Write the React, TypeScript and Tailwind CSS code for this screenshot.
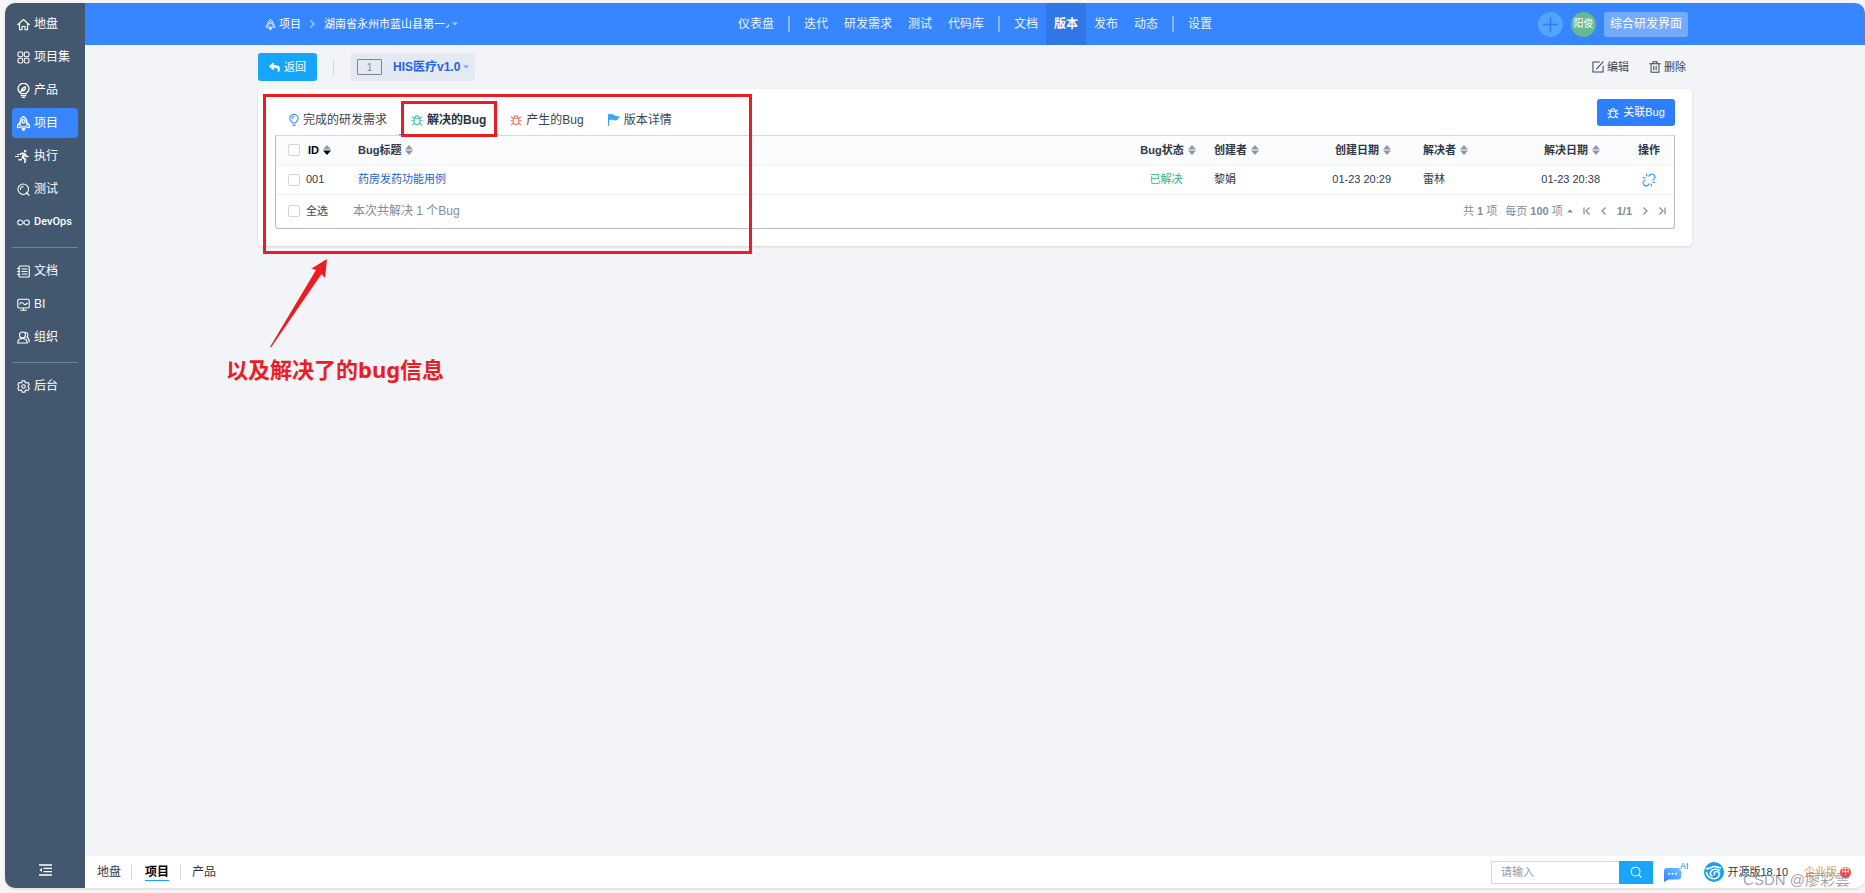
import type { ReactNode } from 'react';
import { FaReply, FaRunning } from 'react-icons/fa';
import { Unlink } from 'lucide-react';

type MenuItem = { name: string; icon: ReactNode; active?: boolean; textClass?: string };

function Icon({ children, className = 'size-[13px]' }: { children: ReactNode; className?: string }) {
  return (
    <svg
      viewBox="0 0 26 26"
      fill="none"
      stroke="currentColor"
      strokeWidth="2.2"
      strokeLinecap="round"
      strokeLinejoin="round"
      aria-hidden="true"
      className={`shrink-0 ${className}`}
    >
      {children}
    </svg>
  );
}

const HomeIcon = () => (
  <Icon>
    <path d="M1.5 13.5 13 3l11.5 10.5M5 11v12.5h5V17h6v6.5h5V11" />
  </Icon>
);

const ProgramIcon = () => (
  <Icon>
    <rect x="2" y="2" width="9.5" height="9.5" rx="3" />
    <rect x="14.5" y="2" width="9.5" height="9.5" rx="3" />
    <rect x="2" y="14.5" width="9.5" height="9.5" rx="3" />
    <rect x="14.5" y="14.5" width="9.5" height="9.5" rx="3" />
  </Icon>
);

const ProductIcon = () => (
  <Icon className="-mx-px size-[15px]">
    <path d="M8.5 18.500C7.500 16 3.500 15 3.500 10a9.500 9.500 0 0 1 19 0c0 5-4 6-5 8.500z" />
    <path d="M9.5 13c0-4 3-5.500 7-6.500 0 4-1.500 7-5.500 7M8.500 15l4-4.500" />
    <path d="M9 22h8M11 25h4" />
  </Icon>
);

const RocketIcon = ({ className }: { className?: string }) => (
  <Icon className={className}>
    <path d="M13 1C8.500 3.500 7 7.500 7 12c-3 1.500-4.500 4-4.500 7.500 1.500 1 3.500.5 5-.5h11c1.500 1 3.500 1.500 5 .5 0-3.500-1.500-6-4.500-7.500 0-4.500-1.500-8.500-6-11z" />
    <circle cx="13" cy="9" r="2.8" />
    <path d="M7 12v4M19 12v4" />
    <path d="M10.500 22h5L13 25.500z" fill="currentColor" />
  </Icon>
);

const RunIcon = () => (
  <span className="flex w-[13px] shrink-0 items-center justify-end">
    <svg viewBox="0 0 4 12" className="h-3 w-1 shrink-0" stroke="currentColor" aria-hidden="true">
      <path d="M0 6.500h4M2 4.500h2" />
    </svg>
    <FaRunning className="-ml-0.5 size-[13px] shrink-0" />
  </span>
);

const TestIcon = () => (
  <Icon>
    <circle cx="12.500" cy="12.500" r="10.500" />
    <path d="M7 12.500A5.500 5.500 0 0 1 12.500 7M19 19.500l5 5" />
  </Icon>
);

const DevopsIcon = () => (
  <Icon>
    <path d="M13 13c-2.500-3.500-4-5-6.500-5a5 5 0 0 0 0 10c2.500 0 4-1.500 6.500-5s4-5 6.500-5a5 5 0 0 1 0 10c-2.500 0-4-1.500-6.500-5z" />
  </Icon>
);

const DocIcon = () => (
  <Icon>
    <rect x="4" y="2" width="20.500" height="22" rx="2" />
    <path d="M1 7h4.500M1 13h4.500M1 19h4.500M10 8h10M10 13h10M10 18h10" />
  </Icon>
);

const BiIcon = () => (
  <Icon>
    <rect x="1.500" y="2.500" width="23" height="17.500" rx="3" />
    <path d="M5.500 12c2.500-4 4.500-4 7-1s4.500 3 8-.5M7.500 24.500h11M13 20.500v3.500" />
  </Icon>
);

const OrgIcon = () => (
  <Icon>
    <circle cx="11" cy="8" r="6" />
    <path d="M1.500 24c0-6 3.500-9 9.500-9s9.500 3 9.500 9zM17 2.500c5 .5 6.500 6.500 3 10 3 1.500 4.500 4.500 4.500 9.500" />
  </Icon>
);

const AdminIcon = () => (
  <Icon>
    <path d="M10.500 1.500h5l1 3.500 2 1 3.500-1 2.500 4-2 3v2l2 3-2.500 4-3.500-1-2 1-1 3.500h-5l-1-3.500-2-1-3.500 1-2.500-4 2-3v-2l-2-3L4 5l3.500 1 2-1z" />
    <circle cx="13" cy="13" r="3.500" />
  </Icon>
);

const BugIcon = ({ className }: { className?: string }) => (
  <Icon className={className ?? 'size-[12px]'}>
    <path d="M7 9h12v8a6 6 0 0 1-12 0zM8.500 9a4.500 5 0 0 1 9 0M1.500 14.500H7M19 14.500h5.500M3 6.500 7 10M23 6.500 19 10M3 23.500l4.500-4M23 23.500l-4.500-4" />
  </Icon>
);

const BulbIcon = () => (
  <Icon className="-mx-px size-[12px] text-[#2e7fff]">
    <path d="M9.500 19.500C8.500 16 4 15 4 10a9 9 0 0 1 18 0c0 5-4.500 6-5.500 9.500zM10 24.500h6M9 9.500A4.500 4.500 0 0 1 13 5.500" />
  </Icon>
);

const FlagIcon = () => (
  <svg viewBox="0 0 12 12" className="size-[12px] shrink-0" fill="#37a9fb" aria-hidden="true">
    <path d="M0 0h1v12H0zM1 .5c2-1 3.500-.5 5 .6S9.500 2.500 12 2.500C10.800 3.600 10.500 4.800 9.500 6 7.500 7 6 6.200 4.500 5.800S2 5.800 1 6.500z" />
  </svg>
);

function Caret({ up = false }: { up?: boolean }) {
  return (
    <svg viewBox="0 0 6 4" className="h-1 w-1.5 shrink-0" fill="currentColor" aria-hidden="true">
      <path d={up ? 'M0 3.500 3 .5l3 3z' : 'M0 .5h6l-3 3z'} />
    </svg>
  );
}

function SortIcon({ desc = false }: { desc?: boolean }) {
  return (
    <svg viewBox="0 0 8 10" className="h-2.5 w-2 shrink-0" aria-hidden="true">
      <path d="M4 0 8 4.400H0z" fill="#9197a8" />
      <path d="M4 10 0 5.600h8z" fill={desc ? '#000' : '#9197a8'} />
    </svg>
  );
}

const menuGroups: MenuItem[][] = [
  [
    { name: '地盘', icon: <HomeIcon /> },
    { name: '项目集', icon: <ProgramIcon /> },
    { name: '产品', icon: <ProductIcon /> },
    { name: '项目', icon: <RocketIcon className="-mx-px size-[15px]" />, active: true },
    { name: '执行', icon: <RunIcon /> },
    { name: '测试', icon: <TestIcon /> },
    { name: 'DevOps', icon: <DevopsIcon />, textClass: "font-['Roboto',sans-serif] text-[11px] font-medium" },
  ],
  [
    { name: '文档', icon: <DocIcon /> },
    { name: 'BI', icon: <BiIcon /> },
    { name: '组织', icon: <OrgIcon /> },
  ],
  [{ name: '后台', icon: <AdminIcon /> }],
];

const navGroups = [
  ['仪表盘'],
  ['迭代', '研发需求', '测试', '代码库'],
  ['文档', '版本', '发布', '动态'],
  ['设置'],
];

function Sidebar() {
  return (
    <aside className="flex w-20 shrink-0 flex-col bg-[#43586f] px-[7px] pt-1.5 text-xs text-white">
      {menuGroups.map((group, i) => (
        <ul
          key={i}
          className={`flex flex-col gap-[3px] ${i > 0 ? 'mt-2.5 border-t border-[#6d8199] pt-2' : ''}`}
        >
          {group.map((item) => (
            <li key={item.name}>
              <a
                href="#"
                className={`flex h-[30px] items-center gap-1 rounded-sm pl-[5px] ${item.active ? 'bg-[#3785ff]' : ''}`}
              >
                {item.icon}
                <span className={item.textClass}>{item.name}</span>
              </a>
            </li>
          ))}
        </ul>
      ))}
      <button type="button" aria-label="收起" className="mx-auto mt-auto mb-3">
        <svg viewBox="0 0 13 12" className="h-3 w-[13px]" stroke="currentColor" strokeWidth="1.3" aria-hidden="true">
          <path d="M0 1h13M4.500 4.300H13M4.500 7.600H13M0 11h13" />
          <path d="M3 4v4L.5 6z" fill="currentColor" stroke="none" />
        </svg>
      </button>
    </aside>
  );
}

function Header() {
  return (
    <header className="h-[42px] shrink-0 bg-[#3785ff] text-xs text-white">
      <div className="mx-auto flex h-full max-w-[1434px] items-center">
        <div className="flex flex-1 items-center text-[11px]">
          <a href="#" className="ml-[7px] flex items-center gap-[3px]">
            <RocketIcon className="size-[11px]" />
            项目
          </a>
          <svg viewBox="0 0 5 8" className="mx-[9px] h-2 w-[5px]" fill="none" stroke="#b5d2ff" strokeWidth="1.3" aria-hidden="true">
            <path d="m.5.5 3.500 3.500-3.500 3.500" />
          </svg>
          <button type="button" className="flex items-center gap-[3px]">
            <span className="w-[125px] overflow-hidden text-left whitespace-nowrap">湖南省永州市蓝山县第一人民医院</span>
            <span className="text-[#a9ccff]">
              <Caret />
            </span>
          </button>
        </div>
        <nav className="flex h-full items-center">
          {navGroups.map((group, i) => (
            <div key={i} className="flex h-full items-center">
              {i > 0 && <span className="mx-1.5 h-4 w-0.5 bg-[#87b6ff]" />}
              {group.map((name) => (
                <a
                  key={name}
                  href="#"
                  className={`flex h-full items-center px-2 ${name === '版本' ? 'bg-[#3076e4] font-bold' : 'text-[#ebf3ff]'}`}
                >
                  {name}
                </a>
              ))}
            </div>
          ))}
        </nav>
        <div className="flex flex-1 items-center justify-end gap-2">
          <button type="button" aria-label="新建" className="flex size-[25px] items-center justify-center rounded-full bg-[#53a3ff] text-[#2c7bf5]">
            <svg viewBox="0 0 15 15" className="size-[15px]" stroke="currentColor" strokeWidth="1.5" aria-hidden="true">
              <path d="M7.500 0v15M0 7.500h15" />
            </svg>
          </button>
          <button type="button" className="flex size-[25px] items-center justify-center rounded-full bg-[#66b991] text-[10px] whitespace-nowrap">
            阳俊
          </button>
          <button type="button" className="mr-1 h-[25px] rounded-[3px] bg-[#73aaff] px-1.5">
            综合研发界面
          </button>
        </div>
      </div>
    </header>
  );
}

function Toolbar() {
  return (
    <div className="flex items-center py-2 text-[11px] text-[#3c4353]">
      <button type="button" className="flex h-7 w-[59px] items-center justify-center gap-1 rounded-[3px] bg-[#18a6fd] text-white">
        <FaReply className="size-[11px]" />
        返回
      </button>
      <span className="ml-4 h-4 w-px bg-[#d5d8de]" />
      <button type="button" className="ml-[17px] flex h-7 items-center rounded-[3px] bg-[#e5e9f2] px-1.5">
        <span className="flex h-4 w-[25px] items-center justify-center rounded-[1px] border border-[#7d849a] text-[10px] text-[#7d849a]">1</span>
        <span className="ml-[11px] text-xs font-bold text-[#2463e6]">HIS医疗v1.0</span>
        <span className="ml-[3px] text-[#7fa8f5]">
          <Caret />
        </span>
      </button>
      <button type="button" className="ml-auto flex items-center gap-[3px]">
        <Icon className="size-[12px]">
          <path d="M16 2H2v22h22V11M10 17 24 2" />
        </Icon>
        编辑
      </button>
      <button type="button" className="mr-1.5 ml-5 flex items-center gap-[3px]">
        <Icon className="size-[12px]">
          <path d="M1.500 6h23M8.500 6V1.500h9V6M4.500 6v18.500h17V6M10.500 11.500v7.500M15.500 11.500v7.500" />
        </Icon>
        删除
      </button>
    </div>
  );
}

const tabs = [
  { name: '完成的研发需求', icon: <BulbIcon /> },
  { name: '解决的Bug', icon: <BugIcon className="size-[12px] text-[#35c79b]" />, active: true },
  { name: '产生的Bug', icon: <BugIcon className="size-[12px] text-[#f96a64]" /> },
  { name: '版本详情', icon: <FlagIcon /> },
];

function Th({ children, className = '' }: { children: ReactNode; className?: string }) {
  return (
    <th className={`px-2 ${className}`}>
      <span className="flex items-center gap-1">
        {children}
        <SortIcon />
      </span>
    </th>
  );
}

function Check({ label }: { label: string }) {
  return (
    <input
      type="checkbox"
      aria-label={label}
      className="size-3 shrink-0 appearance-none rounded-[2px] border border-[#d3d6dc] bg-white checked:bg-[#2e7fff]"
    />
  );
}

function PageButton({ d, label }: { d: string; label: string }) {
  return (
    <button type="button" aria-label={label}>
      <svg viewBox="0 0 8 8" className="size-2" fill="none" stroke="currentColor" strokeWidth="1.2" aria-hidden="true">
        <path d={d} />
      </svg>
    </button>
  );
}

function BugTable() {
  return (
    <div className="rounded-b-[3px] border border-[#b9bbbf] border-t-[#d6d8dc] text-[11px] text-[#2f3747]">
      <table className="w-full table-fixed border-collapse text-left">
        <colgroup>
          <col className="w-[74px]" />
          <col />
          <col className="w-[76px]" />
          <col className="w-[100px]" />
          <col className="w-[109px]" />
          <col className="w-[100px]" />
          <col className="w-[109px]" />
          <col className="w-[50px]" />
        </colgroup>
        <thead className="bg-[#fafcfe]">
          <tr className="h-[29px] border-b border-[#eff1f4]">
            <th className="pl-3">
              <span className="flex items-center gap-1">
                <Check label="全选" />
                <span className="ml-1 text-black">ID</span>
                <SortIcon desc />
              </span>
            </th>
            <Th>Bug标题</Th>
            <Th className="[&>span]:justify-center">Bug状态</Th>
            <Th>创建者</Th>
            <Th className="pr-6 [&>span]:justify-end">创建日期</Th>
            <Th>解决者</Th>
            <Th className="pr-6 [&>span]:justify-end">解决日期</Th>
            <th className="text-center">操作</th>
          </tr>
        </thead>
        <tbody>
          <tr className="h-[29px] border-b border-[#eff1f4]">
            <td className="pl-3">
              <label className="flex items-center gap-1.5">
                <Check label="001" />
                001
              </label>
            </td>
            <td className="px-2">
              <a href="#" className="text-[#2a5fd0]">药房发药功能用例</a>
            </td>
            <td className="pr-1 text-center text-[#2fb583]">已解决</td>
            <td className="px-2">黎娟</td>
            <td className="pr-6 text-right">01-23 20:29</td>
            <td className="px-2">雷林</td>
            <td className="pr-6 text-right">01-23 20:38</td>
            <td>
              <button type="button" aria-label="取消关联" className="mx-auto block text-[#37a0fb]">
                <Unlink className="size-[14px]" />
              </button>
            </td>
          </tr>
        </tbody>
      </table>
      <div className="flex h-[33px] items-center pr-2 pl-3 text-[#838a9d]">
        <label className="flex items-center gap-1.5 text-[#3c4353]">
          <Check label="全选" />
          全选
        </label>
        <span className="ml-[25px] text-xs">本次共解决 1 个Bug</span>
        <span className="ml-auto">共 <b>1</b> 项</span>
        <button type="button" className="ml-2 flex items-center gap-1">
          <span>每页 <b>100</b> 项</span>
          <Caret up />
        </button>
        <div className="ml-2.5 flex items-center gap-[9px]">
          <PageButton label="第一页" d="M1 .5v7M6.500.5 3 4l3.500 3.500" />
          <PageButton label="上一页" d="M5.500.5 2 4l3.500 3.500" />
          <b>1/1</b>
          <PageButton label="下一页" d="M2.500.5 6 4 2.500 7.500" />
          <PageButton label="最后一页" d="M7 .5v7M1.500.5 5 4 1.500 7.500" />
        </div>
      </div>
    </div>
  );
}

function Annotation() {
  return (
    <>
      <div className="pointer-events-none absolute top-[5px] left-[5px] h-40 w-[489px] border-3 border-[#ed1c24]" />
      <svg viewBox="0 0 60 92" className="pointer-events-none absolute top-[168px] left-3 h-[92px] w-[60px]" fill="#ed1c24" aria-hidden="true">
        <path d="M57 2 41.500 11.500l4.500 1.500L0 90l1 .5L51.500 17l3.500 4z" />
      </svg>
      <p className="absolute top-[264px] -left-8 font-['Noto_Sans','Noto_Sans_CJK_SC',sans-serif] text-[22px] leading-8 font-bold whitespace-nowrap text-[#ed1c24]">
        以及解决了的bug信息
      </p>
    </>
  );
}

function BuildCard() {
  return (
    <section className="relative rounded bg-white px-[17px] pb-[17px] shadow-sm">
      <div className="flex h-[46px] items-end">
        <div className="ml-0.5 flex text-xs text-[#3c4353]" role="tablist">
          {tabs.map((tab) => (
            <button
              key={tab.name}
              type="button"
              role="tab"
              aria-selected={!!tab.active}
              className={`relative flex h-8 items-center gap-1 border-b px-3 pt-0.5 ${tab.active ? 'border-[#2e7fff] font-bold text-[#2b3242]' : 'border-transparent'}`}
            >
              {tab.icon}
              {tab.name}
              {tab.active && (
                <span className="pointer-events-none absolute -top-0.5 right-px -bottom-[3px] left-0.5 z-10 border-3 border-[#ed1c24]" />
              )}
            </button>
          ))}
        </div>
        <button type="button" className="mb-[9px] ml-auto flex h-[27px] w-[78px] items-center justify-center gap-1 rounded-[3px] bg-[#2e7fff] text-[11px] text-white">
          <BugIcon />
          关联Bug
        </button>
      </div>
      <BugTable />
      <Annotation />
    </section>
  );
}

function Logo() {
  return (
    <svg viewBox="0 0 20 20" className="size-5 shrink-0" fill="none" aria-hidden="true">
      <circle cx="10" cy="10" r="10" fill="#18a0f5" />
      <path
        d="M2.500 6.500c3 1 4.500-2 8-2 2.500 0 3.500 1.300 6 1.200M2.500 10.500c.5 4 4.500 7 9 6 4-1 5-5 2.500-6.600-2-1.200-4.500.4-3.600 2.600M15.500 8.500c-2.500-2-7.500-1.800-9 1.800-.6 1.800.4 3.200 1.500 3.700"
        stroke="#fff"
        strokeWidth="1.6"
        strokeLinecap="round"
      />
    </svg>
  );
}

function Footer() {
  return (
    <footer className="relative flex h-8 shrink-0 items-center bg-white text-xs text-[#2f3747]">
      <a href="#" className="ml-3">地盘</a>
      <span className="mx-2.5 h-4 w-px bg-[#d5d8de]" />
      <a href="#" className="ml-[3px] border-b border-[#18a6fd] font-bold text-black">项目</a>
      <span className="mx-[11px] h-4 w-px bg-[#d5d8de]" />
      <a href="#">产品</a>
      <form className="ml-auto flex h-[23px]">
        <input
          type="text"
          aria-label="搜索"
          placeholder="请输入"
          className="w-32 border border-r-0 border-[#d5d8de] px-[9px] text-[11px] outline-none placeholder:text-[#9197a8]"
        />
        <button type="submit" aria-label="搜索" className="flex w-[34px] items-center justify-center bg-[#18a6fd] text-white">
          <Icon className="size-[12px]">
            <circle cx="12" cy="12" r="9.5" />
            <path d="m19 19 5.500 5.500" />
          </Icon>
        </button>
      </form>
      <button type="button" className="ml-[11px] flex h-5 items-end">
        <svg viewBox="0 0 19 16" className="h-4 w-[19px]" aria-hidden="true">
          <defs>
            <linearGradient id="chat" x1="1" y1="0" x2="0" y2="1">
              <stop offset="0" stopColor="#6cc8ff" />
              <stop offset="1" stopColor="#2e7fff" />
            </linearGradient>
          </defs>
          <path d="M3 2h12l2.500 4-.5 5.500a2.500 2.500 0 0 1-2.500 2H4.500L0 16V5a3 3 0 0 1 3-3z" fill="url(#chat)" />
          <circle cx="5" cy="7.800" r="1" fill="#fff" />
          <circle cx="8.500" cy="7.800" r="1" fill="#fff" />
          <circle cx="12" cy="7.800" r="1" fill="#fff" />
        </svg>
        <span className="-ml-[3px] self-start text-[9px] leading-none text-[#2e7fff]">AI</span>
      </button>
      <a href="#" className="ml-4 flex items-center gap-[3px] text-[11px]">
        <Logo />
        开源版18.10
      </a>
      <a href="#" className="mr-[14px] ml-4 flex items-center gap-[3px] text-[11px] text-[#d9955c]">
        企业版
        <span className="flex size-[11px] items-center justify-center rounded-full bg-[#ee4b4b] text-[8px] leading-none text-white">中</span>
      </a>
      <span className="pointer-events-none absolute right-[15px] -bottom-0.5 text-[15px] whitespace-nowrap text-[#777a80]/70">CSDN @廖彩雲</span>
    </footer>
  );
}

export default function App() {
  return (
    <div className="flex h-screen bg-[#f6f6f7] pt-[3px] pb-[5px] pl-[5px] font-['Liberation_Sans','Noto_Sans_CJK_SC',sans-serif]">
      <div className="flex flex-1 overflow-hidden rounded-[10px] shadow-sm">
        <Sidebar />
        <div className="flex min-w-0 flex-1 flex-col">
          <Header />
          <main className="flex-1 bg-[#f3f4f7]">
            <div className="mx-auto max-w-[1434px]">
              <Toolbar />
              <BuildCard />
            </div>
          </main>
          <Footer />
        </div>
      </div>
    </div>
  );
}
